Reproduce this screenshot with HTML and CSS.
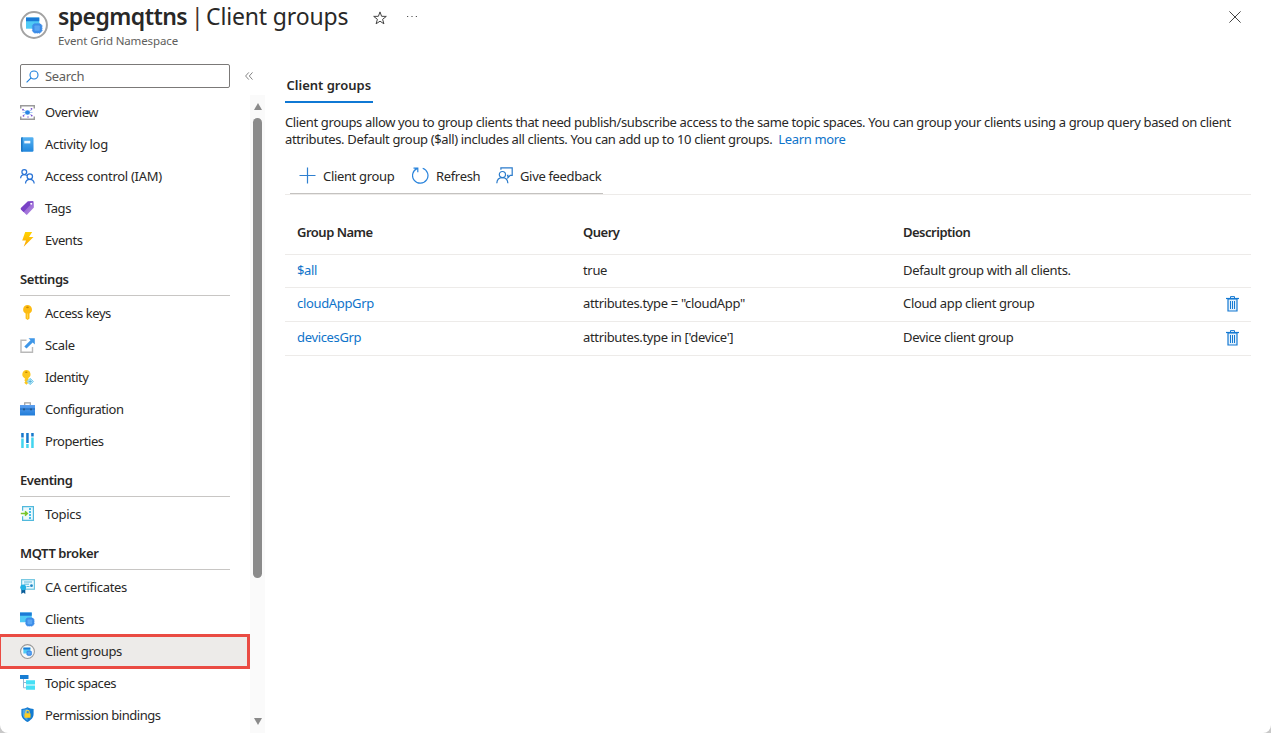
FILE: index.html
```html
<!DOCTYPE html>
<html lang="en">
<head>
<meta charset="utf-8">
<title>spegmqttns | Client groups</title>
<link rel="stylesheet" href="styles.css">
</head>
<body>
<svg class="defs" width="0" height="0">
  <defs>
    <linearGradient id="blue" x1="0" y1="0" x2="0" y2="1"><stop offset="0" stop-color="#5ea0ef"/><stop offset="1" stop-color="#1f7cd8"/></linearGradient>
    <linearGradient id="book" x1="0" y1="0" x2="0" y2="1"><stop offset="0" stop-color="#55b2f2"/><stop offset="1" stop-color="#2186dc"/></linearGradient>
    <linearGradient id="purple" x1="0" y1="0" x2="1" y2="1"><stop offset="0" stop-color="#8450cc"/><stop offset="1" stop-color="#b48ae2"/></linearGradient>
    <linearGradient id="bolt" x1="0" y1="0" x2="0" y2="1"><stop offset="0" stop-color="#ffd400"/><stop offset="1" stop-color="#fba50a"/></linearGradient>
    <symbol id="client" viewBox="0 0 16 16">
      <path d="M0 .5h12.500v10.500H0z" fill="#4fcaf5"/><path d="M0 .5h12.500v3.500H0z" fill="#1b7ad6"/>
      <rect x="6" y="6" width="9" height="9" rx="2.500" fill="#3d8de8"/>
      <path d="M5.500 8.500H16M5.500 10.500H16M5.500 12.500H16M8.500 5.500V16M10.500 5.500V16M12.500 5.500V16" stroke="#3d8de8" stroke-width=".6"/>
      <rect x="8" y="8" width="5" height="5" rx=".8" fill="#5ba6f3"/>
    </symbol>
  </defs>
</svg>
<div class="page">
  <header class="header">
    <svg class="logo" viewBox="0 0 28 28"><circle cx="14" cy="14" r="12.900" fill="#fff" stroke="#a3a3a3" stroke-width="2"/><use href="#client" x="6" y="6" width="17" height="17"/></svg>
    <div class="titles">
      <h1 class="title"><b class="name">spegmqttns</b><span class="bar">|</span><span class="section">Client groups</span></h1>
      <div class="subtitle">Event Grid Namespace</div>
    </div>
    <svg class="star" viewBox="0 0 14 14"><path d="M7 .9l1.600 4.400 4.700.1-3.700 2.900 1.300 4.500L7 10.200l-3.900 2.600 1.300-4.500L.7 5.400l4.700-.1z" fill="none" stroke="#444"/></svg>
    <svg class="dots" viewBox="0 0 12 4"><path d="M1 1.500h1.200M5.400 1.500h1.200M9.800 1.500H11" stroke="#555" stroke-width="1.200"/></svg>
    <svg class="close" viewBox="0 0 12 12"><path d="M.4.4l11.200 11.200M11.600.4L.4 11.600" stroke="#444" stroke-width="1"/></svg>
  </header>
  <div class="body">
    <aside class="sidebar">
      <div class="searchrow">
        <div class="search"><svg viewBox="0 0 13 13"><circle cx="8" cy="5" r="4" fill="none" stroke="#1c7fdc" stroke-width="1.100"/><path d="M5.100 7.900L.6 12.400" stroke="#1c7fdc" stroke-width="1.200"/></svg><span>Search</span></div>
        <svg class="collapse" viewBox="0 0 8 8"><path d="M3.800.4L.6 4l3.200 3.600M7.500.4L4.300 4l3.200 3.600" fill="none" stroke="#777" stroke-width=".9"/></svg>
      </div>
      <div class="navwrap">
        <nav class="nav">
          <a class="item"><svg viewBox="0 0 15 15"><path d="M.7 3.500V.7h13.600v2.800M.7 11.500v2.800h13.600v-2.800" fill="none" stroke="#9a9a9a" stroke-width="1.500"/><path d="M3 4.500l9 6M3 10.500l9-6M2.500 7.500h10" stroke="#8fbcf0" stroke-width=".8"/><circle cx="7.500" cy="7.500" r="2.300" fill="#2a86e4"/><g fill="#7b4fd0"><circle cx="3" cy="4.700" r=".9"/><circle cx="11.500" cy="3.800" r=".9"/><circle cx="3.500" cy="10.800" r=".9"/><circle cx="11.700" cy="10.600" r=".9"/><circle cx="8" cy="12" r=".7"/></g></svg><span>Overview</span></a>
          <a class="item wide"><svg viewBox="0 0 15 15"><rect x="1" y=".2" width="12.500" height="14.600" rx="1.200" fill="url(#book)"/><path d="M1 1.400Q1 .2 2.200.2H2.600v14.600h-.4Q1 14.800 1 13.600z" fill="#1b76c4"/><rect x="4.300" y="3.800" width="6" height="2.600" fill="#eef7ff"/></svg><span>Activity log</span></a>
          <a class="item wide"><svg viewBox="0 0 15 15" fill="none" stroke="#2a74d6" stroke-width="1.250"><circle cx="4.300" cy="3.100" r="2.400"/><path d="M.6 9.300C.8 7 2.400 5.600 4.300 5.600c1.100 0 1.900.4 2.600 1"/><circle cx="9.800" cy="7.600" r="2.700"/><path d="M5.500 14.500c.1-2.600 2-4.200 4.300-4.200s4.200 1.600 4.400 4.200"/></svg><span>Access control (IAM)</span></a>
          <a class="item"><svg viewBox="0 0 15 15"><path d="M1 7L7.800.4 12.600.2q1 0 1.100 1L13.900 6.500 7.300 13.600q-.6.600-1.200 0L1 8.400q-.6-.8 0-1.400z" fill="url(#purple)"/><path d="M1 7L7.800.4l4.800-.2q.7 0 .9.400L3.600 11 1 8.400q-.5-.7 0-1.400z" fill="#7a42c6"/><circle cx="11.200" cy="2.800" r="1" fill="#fff"/></svg><span>Tags</span></a>
          <a class="item"><svg class="raised" viewBox="0 0 15 15"><path d="M5.200 0h7L9 5h4.500L3.700 14.800 6 8.500H2.200z" fill="url(#bolt)"/></svg><span>Events</span></a>
          <h2 class="group">Settings</h2>
          <a class="item"><svg class="raised" viewBox="0 0 15 15"><path d="M7.500 0a4.500 4.500 0 0 1 2 8.500v4.900l-1.900 1.600-2-1.600V8.500a4.500 4.500 0 0 1 1.900-8.500z" fill="#fdbc14"/><path d="M7.400 8.500v5" stroke="#ffd94f"/><ellipse cx="7.500" cy="2.300" rx="1.400" ry=".9" fill="#c98a00"/></svg><span>Access keys</span></a>
          <a class="item wide"><svg viewBox="0 0 15 15"><path d="M6.500 2.300H1v12h11.500V9" fill="none" stroke="#b9b9b9" stroke-width="1.400"/><path d="M8.500.2h6.300v6.300l-2.100-2.100-6.200 6.200-2.200-2.200 6.200-6.200z" fill="#3f97e8"/></svg><span>Scale</span></a>
          <a class="item"><svg viewBox="0 0 15 15"><path d="M6.300 0a4.300 4.300 0 0 1 2.100 8v4.700l-2 2-2.100-2 1-1.300-1-1.300 1-1.200-1-1A4.300 4.300 0 0 1 6.300 0z" fill="#fcc71f"/><ellipse cx="6.300" cy="2.300" rx="1.300" ry=".8" fill="#c08500"/><path d="M10.200 8.300l3.300 3.200-3.300 3.200L7 11.500z" fill="#bfe9f9" stroke="#7fcdea"/><path d="M10.200 9.500v4M8.500 11.500h3.400" stroke="#43a6d3" stroke-width=".7"/></svg><span>Identity</span></a>
          <a class="item"><svg viewBox="0 0 15 15"><path d="M4.700 3.500V.9h5.600v2.600" fill="none" stroke="#a0a0a0" stroke-width="1.200"/><rect y="3" width="15" height="10.500" fill="url(#blue)"/><path d="M0 7h15" stroke="#1b67b8"/><rect x="3" y="6.500" width="2" height="1.800" fill="#24598f"/><rect x="10" y="6.500" width="2" height="1.800" fill="#24598f"/></svg><span>Configuration</span></a>
          <a class="item"><svg class="raised" viewBox="0 0 15 15"><path d="M1.200 0h2.500v4.500H1.200zM6.200 0h2.500v10H6.200zM11.200 0h2.500v3.500h-2.500z" fill="#1678cc"/><path d="M1.200 5.500h2.500v9.500H1.200zM6.200 11h2.500v4H6.200zM11.200 4.500h2.500v10.500h-2.500z" fill="#42d5ef"/></svg><span>Properties</span></a>
          <h2 class="group">Eventing</h2>
          <a class="item wide"><svg class="raised" viewBox="0 0 15 15"><path d="M2.600 4.800V.6h10.800v13.800H2.600v-4.200" fill="#edf9fd" stroke="#51b9dc" stroke-width="1.200"/><path d="M10 2v11.200" stroke="#45bdea" stroke-width="2" stroke-dasharray="2 1"/><path d="M.8 7.500h6M5 5.300l2.300 2.200L5 9.700" fill="none" stroke="#79c52c" stroke-width="1.600"/></svg><span>Topics</span></a>
          <h2 class="group">MQTT broker</h2>
          <a class="item wide"><svg class="raised" viewBox="0 0 15 15"><rect x="1.600" y=".7" width="12.800" height="9.500" fill="#eafaff" stroke="#6cc4df" stroke-width="1.200"/><path d="M4 3h8M4 5.200h5M6.500 7.500h3" stroke="#5bb8dc"/><circle cx="11.500" cy="6.700" r="1.400" fill="#2488c7"/><path d="M1.300 9h4v6l-2-1.400-2 1.400z" fill="#095c98"/><circle cx="3.200" cy="8.300" r="2.900" fill="#21b1e5"/></svg><span>CA certificates</span></a>
          <a class="item wide"><svg viewBox="0 0 16 16"><use href="#client"/></svg><span>Clients</span></a>
          <a class="item selected"><svg viewBox="0 0 28 28"><circle cx="14" cy="14" r="12.900" fill="#f8f8f8" stroke="#999" stroke-width="2"/><use href="#client" x="6" y="6" width="17" height="17"/></svg><span>Client groups</span></a>
          <a class="item"><svg class="raised" viewBox="0 0 15 15"><path d="M3.500 4v8.800H7M3.500 7.500H7" fill="none" stroke="#93b7d3"/><path d="M0 0h8.500v4H0z" fill="#187dd3"/><path d="M6 5.200h9v4.300H6zM6 10.500h9v4.300H6z" fill="#46dff5"/></svg><span>Topic spaces</span></a>
          <a class="item"><svg class="raised" viewBox="0 0 15 15"><path d="M7.500.2C9.500 1.500 11.500 1.800 13.600 1.900v5c0 4-3.300 6.500-6.100 8-2.800-1.500-6.100-4-6.100-8v-5C3.500 1.800 5.500 1.500 7.500.2z" fill="#147bd1"/><path d="M7.500 1.600v12C5 12.200 2.600 10 2.600 6.800V3c1.800-.1 3.400-.5 4.900-1.400z" fill="#48a5ed"/><path d="M5.800 6.500V5q0-1.700 1.700-1.700T9.200 5v1.500" fill="none" stroke="#f8d548" stroke-width="1.100"/><rect x="4.500" y="6.200" width="6" height="4.600" rx=".6" fill="#ffce24"/></svg><span>Permission bindings</span></a>
        </nav>
        <div class="scroll"><span class="up"></span><span class="thumb"></span><span class="down"></span></div>
      </div>
    </aside>
    <main class="main">
      <div class="tab">Client groups</div>
      <p class="intro">Client groups allow you to group clients that need publish/subscribe access to the same topic spaces. You can group your clients using a group query based on client<br>attributes. Default group ($all) includes all clients. You can add up to 10 client groups. &nbsp;<a class="link">Learn more</a></p>
      <div class="toolbar">
        <div class="tools">
          <div class="tool t1"><svg viewBox="0 0 17 17"><path d="M8.500.5v16M.5 8.500h16" stroke="#2f80d0" stroke-width="1.200"/></svg><span>Client group</span></div>
          <div class="tool t2"><svg viewBox="0 0 17 17" fill="none" stroke="#2a84dc" stroke-width="1.200"><path d="M10.700 1.200A7.700 7.700 0 1 1 5.300 1.400M1.500 1.100h4.300v4.200"/></svg><span>Refresh</span></div>
          <div class="tool t3"><svg viewBox="0 0 17 17" fill="none" stroke="#2a7bcb" stroke-width="1.200"><path d="M4.900 2.700V.9h11.300v7.500h-2l-2.300 2.300V8.400h-1"/><circle cx="6.400" cy="7.600" r="3.100"/><path d="M.8 16.200c.2-3.400 2.500-5.500 5.600-5.500s5.200 2.100 5.500 5.500"/></svg><span>Give feedback</span></div>
        </div>
      </div>
      <div class="table">
        <div class="row head"><span>Group Name</span><span>Query</span><span>Description</span></div>
        <div class="row r1"><a class="link">$all</a><span>true</span><span>Default group with all clients.</span></div>
        <div class="row r2"><a class="link">cloudAppGrp</a><span>attributes.type = "cloudApp"</span><span>Cloud app client group</span><svg class="trash" viewBox="0 0 13 16"><path d="M2 3h9v12H2z" fill="#e3f1fc" stroke="#1479d2" stroke-width="1.200"/><path d="M0 2.500h13" stroke="#1479d2" stroke-width="1.200"/><path d="M4.500 2V.6h4V2M4.500 5v8M6.500 5v8M8.500 5v8" fill="none" stroke="#1479d2"/></svg></div>
        <div class="row r3"><a class="link">devicesGrp</a><span>attributes.type in ['device']</span><span>Device client group</span><svg class="trash" viewBox="0 0 13 16"><path d="M2 3h9v12H2z" fill="#e3f1fc" stroke="#1479d2" stroke-width="1.200"/><path d="M0 2.500h13" stroke="#1479d2" stroke-width="1.200"/><path d="M4.500 2V.6h4V2M4.500 5v8M6.500 5v8M8.500 5v8" fill="none" stroke="#1479d2"/></svg></div>
      </div>
    </main>
  </div>
</div>
</body>
</html>
```
FILE: styles.css
```css
* { box-sizing: border-box; }
html { background: #c8c8c8; }
body { margin: 0; font: 13px/17px "Noto Sans", "Open Sans", sans-serif; letter-spacing: -0.34px; color: #292827; }
svg { display: block; flex: none; }
.defs { position: absolute; }
.page { width: 1271px; height: 733px; overflow: hidden; background: #fff; border-radius: 0 0 8px 8px; display: flex; flex-direction: column; }
.header { height: 64px; display: flex; padding-left: 20px; flex: none; }
.logo { width: 28px; height: 28px; margin-top: 11px; }
.titles { width: 291px; margin-left: 10px; }
.title { margin: 0; padding-top: 1px; display: flex; font-size: 23px; line-height: 30px; font-weight: 400; white-space: nowrap; }
.name { font-weight: 600; letter-spacing: -0.57px; width: 133px; }
.bar { width: 15px; color: #4a3428; }
.section { letter-spacing: -0.15px; }
.subtitle { font-size: 11.500px; line-height: 16px; margin-top: 2px; color: #605e5c; letter-spacing: -0.13px; }
.star { width: 14px; height: 14px; margin: 11px 0 0 24px; }
.dots { width: 12px; height: 4px; margin: 15px 0 0 19px; }
.close { width: 12px; height: 12px; margin: 11px 30px 0 auto; }
.body { flex: 1; display: flex; min-height: 0; }
.sidebar { width: 265px; display: flex; flex-direction: column; }
.searchrow { display: flex; height: 31px; padding-left: 20px; flex: none; }
.search { width: 210px; height: 24px; border: 1px solid #7b7978; border-radius: 2px; display: flex; align-items: center; padding-left: 5px; gap: 6px; color: #605e5c; }
.search svg { width: 13px; height: 13px; }
.collapse { width: 8px; height: 8px; margin: 8px 0 0 15px; }
.navwrap { display: flex; flex: 1; min-height: 0; }
.nav { width: 250px; padding-top: 1px; overflow: hidden; letter-spacing: -0.45px; }
.item { height: 32px; display: flex; align-items: center; padding-left: 20px; gap: 10px; white-space: nowrap; }
.item.wide { letter-spacing: -0.3px; }
.item svg { width: 15px; height: 15px; }
.item svg.raised { margin-bottom: 2px; }
.item.selected { height: 35px; margin: -1px 0 -2px; background: #edebe9; border: 3px solid #ea4b43; border-left-width: 1px; padding-left: 19px; letter-spacing: -0.36px; }
.group { margin: 0 20px 1px; height: 40px; padding-top: 15px; border-bottom: 1px solid #c8c6c4; font-size: 13px; line-height: 17px; font-weight: 600; letter-spacing: -0.4px; }
.scroll { width: 15px; background: #fafafa; display: flex; flex-direction: column; align-items: center; }
.up { border: 4.500px solid transparent; border-top: 0; border-bottom: 7px solid #8a8a8a; margin-top: 8px; }
.thumb { width: 9px; height: 460px; margin-top: 8px; border-radius: 5px; background: #8b8b8b; }
.down { border: 4.500px solid transparent; border-bottom: 0; border-top: 7px solid #8a8a8a; margin-top: 140px; }
.main { width: 966px; margin-left: 20px; }
.tab { width: 88px; height: 39px; padding: 13px 0 0 1.500px; border-bottom: 2px solid #0f78d4; font-weight: 600; white-space: nowrap; letter-spacing: 0; }
.intro { margin: 11px 0 0; white-space: nowrap; letter-spacing: -0.356px; }
.link { color: #0f74ca; }
.toolbar { height: 47px; border-bottom: 1px solid #edebe9; padding-left: 5px; }
.tools { width: 313px; height: 46px; display: flex; align-items: center; padding: 11px 0 0 9px; border-bottom: 1px solid #c4c2c0; white-space: nowrap; }
.tool { display: flex; align-items: center; gap: 7px; }
.tool svg { width: 17px; height: 17px; margin-bottom: 2px; }
.t1 { width: 113px; }
.t2 { width: 84px; }
.row { display: grid; grid-template-columns: 286px 320px 323px auto; align-items: center; padding-left: 12px; border-bottom: 1px solid #edebe9; }
.head { height: 60px; padding-top: 16px; font-weight: 600; letter-spacing: -0.5px; }
.r1 { height: 33px; padding-bottom: 2px; }
.r2, .r3 { height: 34px; padding-bottom: 3px; }
.trash { width: 13px; height: 16px; margin-top: 2px; }
```
